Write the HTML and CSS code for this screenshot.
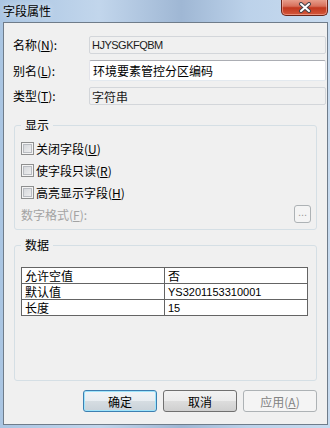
FILE: index.html
```html
<!DOCTYPE html>
<html lang="zh-CN">
<head>
    <meta charset="UTF-8">
    <meta name="viewport" content="width=device-width, initial-scale=1.0">
    <title>字段属性</title>
    <link rel="stylesheet" href="styles.css">
</head>
<body>
    <div class="window">
        <div class="titlebar">
            <span class="title">字段属性</span>
            <button class="close-btn">
                <svg width="14" height="11" viewBox="0 0 14 11">
                    <path d="M3 2 L11 9 M11 2 L3 9" stroke="#43434b" stroke-width="4" stroke-linecap="round"/>
                    <path d="M3 2 L11 9 M11 2 L3 9" stroke="#ffffff" stroke-width="2" stroke-linecap="round"/>
                </svg>
            </button>
        </div>
        <div class="client">
            <!-- name / alias / type -->
            <div class="form">
                <label class="lbl">名称(<u>N</u>):</label>
                <div class="textbox readonly small-row"><span class="latin name-val">HJYSGKFQBM</span></div>
                <label class="lbl">别名(<u>L</u>):</label>
                <div class="textbox editable tall-row">环境要素管控分区编码</div>
                <label class="lbl">类型(<u>T</u>):</label>
                <div class="textbox readonly small-row">字符串</div>
            </div>

            <fieldset class="group display-group">
                <legend>显示</legend>
                <div class="check-row"><span class="checkbox"></span>关闭字段(<u>U</u>)</div>
                <div class="check-row"><span class="checkbox"></span>使字段只读(<u>R</u>)</div>
                <div class="check-row"><span class="checkbox"></span>高亮显示字段(<u>H</u>)</div>
                <div class="format-row">
                    <span class="disabled-text">数字格式(<u>F</u>):</span>
                    <button class="dots-btn">...</button>
                </div>
            </fieldset>

            <fieldset class="group data-group">
                <legend>数据</legend>
                <table class="props">
                    <tr><td>允许空值</td><td>否</td></tr>
                    <tr><td>默认值</td><td class="latin">YS3201153310001</td></tr>
                    <tr><td>长度</td><td class="latin">15</td></tr>
                </table>
            </fieldset>

            <div class="buttons">
                <button class="btn default-btn">确定</button>
                <button class="btn">取消</button>
                <button class="btn disabled-btn">应用(<u>A</u>)</button>
            </div>
        </div>
    </div>
</body>
</html>
```

FILE: styles.css
```css
*{
    box-sizing: border-box;
}
body{
    margin: 0;
    font-family: "Noto Sans CJK SC", "Liberation Sans", sans-serif;
    font-size: 12px;
    color: #000;
}
.window{
    width: 330px;
    height: 428px;
    display: flex;
    flex-direction: column;
    background: linear-gradient(90deg, #aac5e2 0%, #c2d6ec 30%, #9fb7d4 55%, #bcd2ea 75%, #c8dbef 100%);
    overflow: hidden;
}
.titlebar{
    height: 22px;
    display: flex;
    align-items: flex-start;
    padding-left: 3px;
}
.title{
    line-height: 21px;
    color: #000;
    text-shadow: 0 0 6px rgba(255,255,255,0.8);
}
.close-btn{
    margin-left: auto;
    margin-right: 2px;
    margin-top: -1px;
    width: 47px;
    height: 17px;
    border: 1px solid #6b2418;
    border-top: none;
    border-radius: 0 0 5px 5px;
    background: linear-gradient(#e9a492 0%, #d7705b 45%, #c2381f 55%, #d4583b 100%);
    box-shadow: inset 0 0 0 1px rgba(255,200,190,0.5);
    display: flex;
    align-items: center;
    justify-content: center;
    padding: 0;
}
.client{
    flex: 1;
    margin: 0 2px 3px 3px;
    border: 1px solid #6f7c8a;
    background-color: #f0f0f0;
    display: flex;
    flex-direction: column;
}
.latin{
    font-family: "Liberation Sans", "Noto Sans CJK SC", sans-serif;
    font-size: 11px;
}
.name-val{
    letter-spacing: -0.5px;
}

/* top form */
.form{
    display: grid;
    grid-template-columns: 76px 237px;
    row-gap: 6px;
    padding: 13px 0 0 9px;
    align-items: center;
}
.lbl{
    line-height: 16px;
}
.textbox{
    display: flex;
    align-items: center;
    padding-left: 2px;
    border: 1px solid #d3d6da;
    border-radius: 2px;
}
.readonly{
    background-color: #f0f0f0;
    color: #1b1b1b;
}
.small-row{
    height: 18px;
}
.tall-row{
    height: 21px;
    background-color: #fff;
    border-color: #abadb3 #dbdfe6 #e3e9ef #e2e3ea;
    padding-left: 3px;
}

/* group boxes */
.group{
    margin: 0 0 0 10px;
    width: 303px;
    border: 1px solid #d5dfe5;
    border-radius: 3px;
    padding: 0 5px 0 6px;
}
.group legend{
    line-height: 14px;
    padding: 0 4px;
    margin-left: 0;
}
.display-group{
    margin-top: 13px;
    padding-bottom: 6px;
    display: flex;
    flex-direction: column;
}
.check-row{
    height: 18px;
    display: flex;
    align-items: center;
    margin-top: 4px;
}
.check-row:first-of-type{
    margin-top: 7px;
}
.checkbox{
    width: 13px;
    height: 13px;
    border: 1px solid #8e8f8f;
    background: linear-gradient(135deg, #cfd2d6, #f4f4f4);
    box-shadow: inset 0 0 0 1px #f4f4f4, inset 0 0 0 2px #b9bcc1;
    margin-right: 2px;
}
.format-row{
    height: 18px;
    margin-top: 4px;
    display: flex;
    align-items: center;
    justify-content: space-between;
}
.disabled-text{
    color: #a3a3a3;
}
.dots-btn{
    width: 17px;
    height: 18px;
    border: 1px solid #adb2b5;
    border-radius: 3px;
    background-color: #f4f4f4;
    color: #9a9a9a;
    font-family: "Liberation Sans", sans-serif;
    font-size: 11px;
    padding: 0 0 4px;
    line-height: 10px;
}
.data-group{
    margin-top: 8px;
    padding-bottom: 64px;
}
.props{
    margin-top: 15px;
    width: 287px;
    border-collapse: collapse;
    background-color: #fff;
}
.props td{
    border: 1px solid #646464;
    height: 16px;
    padding: 0 0 0 3px;
    line-height: 14px;
    width: 50%;
}

/* bottom buttons */
.buttons{
    display: flex;
    justify-content: flex-end;
    gap: 6px;
    padding-right: 10px;
    margin-top: 9px;
}
.btn{
    width: 74px;
    height: 22px;
    border: 1px solid #707070;
    border-radius: 3px;
    background: linear-gradient(#f2f2f2 0%, #ebebeb 50%, #dddddd 50%, #cfcfcf 100%);
    font-family: "Noto Sans CJK SC", sans-serif;
    font-size: 12px;
    padding: 0;
    color: #000;
}
.default-btn{
    border-color: #3c7fb1;
    box-shadow: inset 0 0 0 1px #9fe4fb;
    background: linear-gradient(#f0f4f7 0%, #e8edf1 50%, #d6dde2 50%, #c9d2d9 100%);
}
.disabled-btn{
    border-color: #adb2b5;
    background: #f4f4f4;
    color: #838383;
}
```
